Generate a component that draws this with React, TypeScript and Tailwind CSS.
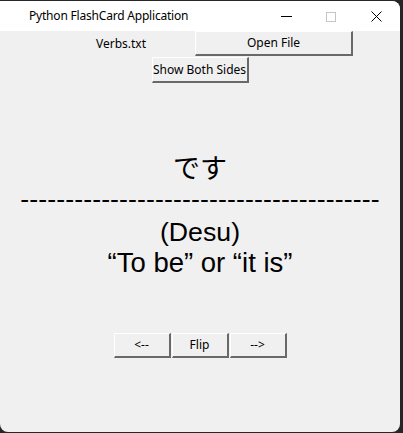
import React from 'react';

const ui = { fontFamily: '"Noto Sans", "Open Sans", sans-serif' };
const big = { fontFamily: '"Liberation Sans", Arial, "Noto Sans CJK JP", sans-serif' };

function TkButton({ label, className }: { label: string; className: string }) {
  return (
    <button
      className={`flex items-center justify-center bg-[#f0f0f0] border-t border-l border-t-white border-l-white border-b-2 border-r-2 border-b-[#696969] border-r-[#696969] text-[12px] text-black ${className}`}
      style={ui}
    >
      {label}
    </button>
  );
}

export default function App() {
  return (
    <div className="w-[403px] h-[433px] bg-[#262626] overflow-hidden">
      <div className="mt-[1px] w-[400px] h-[431px] bg-[#f0f0f0] rounded-tr-lg rounded-b-lg overflow-hidden flex flex-col">
        {/* title bar */}
        <div className="h-[30px] bg-white flex items-center shrink-0 relative">
          <span className="ml-[29px] text-[12px] tracking-[-0.2px] text-black" style={ui}>
            Python FlashCard Application
          </span>
          <div className="absolute left-[281px] top-[15px] w-[11px] h-px bg-black" />
          <div className="absolute left-[326px] top-[11px] w-[10px] h-[10px] border border-[#c5c5c5]" />
          <svg className="absolute left-[371px] top-[10px]" width="11" height="11" viewBox="0 0 11 11">
            <path d="M0.5 0.5 L10.5 10.5 M10.5 0.5 L0.5 10.5" stroke="#000" strokeWidth="1" />
          </svg>
        </div>

        {/* file row */}
        <div className="flex h-[26px]">
          <div className="w-[195px] pl-[47px]">
            <div className="w-[148px] h-full flex items-center justify-center text-[12px] text-black" style={ui}>
              Verbs.txt
            </div>
          </div>
          <TkButton label="Open File" className="w-[158px] h-[25px]" />
        </div>
        <div className="flex justify-center">
          <TkButton label="Show Both Sides" className="w-[97px] h-[26px]" />
        </div>

        {/* card */}
        <div className="flex flex-col items-center text-black pt-[67px]" style={big}>
          <div className="h-[33px] leading-[33px] text-[27px]" style={{ fontFamily: '"Noto Sans CJK JP", sans-serif' }}>
            です
          </div>
          <div className="h-[35px] leading-[32px] text-[26.7px] tracking-[0.1px]">
            ----------------------------------------
          </div>
          <div className="h-[30px] leading-[29px] text-[26.7px]">(Desu)</div>
          <div className="h-[29px] leading-[29px] text-[27.5px]">“To be” or “it is”</div>
        </div>

        {/* nav */}
        <div className="flex justify-center mt-[56px]">
          <TkButton label="<--" className="w-[57px] h-[25px]" />
          <TkButton label="Flip" className="w-[57px] h-[25px] ml-px" />
          <TkButton label="-->" className="w-[57px] h-[25px] ml-px" />
        </div>
      </div>
    </div>
  );
}
